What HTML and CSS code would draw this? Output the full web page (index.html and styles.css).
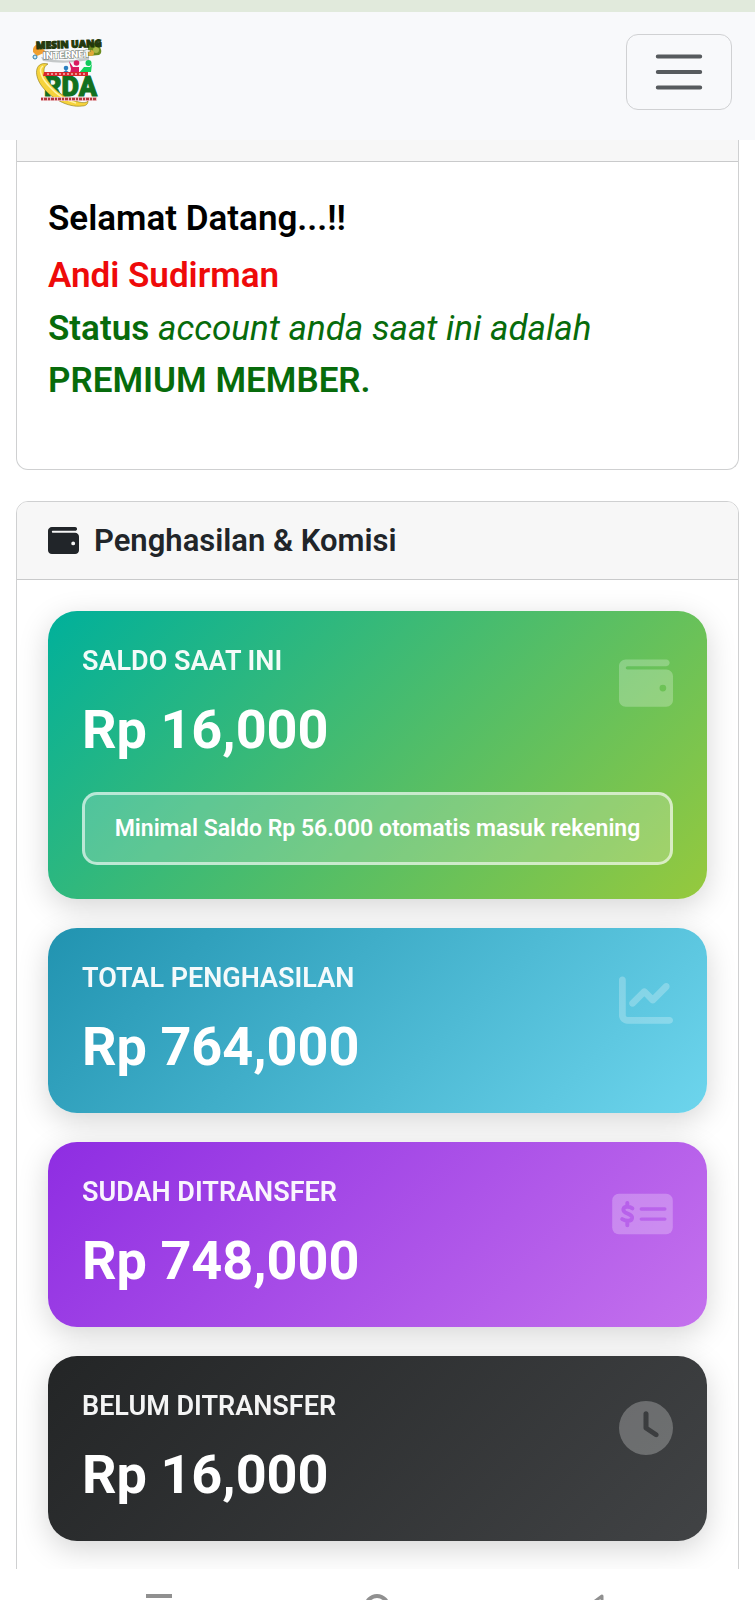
FILE: index.html
```html
<!DOCTYPE html>
<html lang="id">
<head>
    <meta charset="UTF-8">
    <meta name="viewport" content="width=device-width, initial-scale=1.0">
    <title>Member Area</title>
    <link rel="stylesheet" href="styles.css">
</head>
<body>
    <div class="status-strip"></div>
    <nav class="navbar">
        <a class="brand" href="#">
            <svg class="logo" viewBox="0 0 70 70" role="img" aria-label="Logo">
                <path d="M1 15q-1-6 5-8l8 8-9 4z" fill="#f0a030"/>
                <path d="M56 6q9-1 12 4 3 6-1 8l-11 1z" fill="#6b8c1f"/>
                <circle cx="64" cy="13" r="3" fill="#a9b94a"/>
                <circle cx="59" cy="16" r="3" fill="#e0a83a"/>
                <circle cx="3" cy="20" r="2" fill="#cfe9f7" stroke="#2b7fa8"/>
                <path d="M9 20q24 7 48 0v3q-24 5-46 1z" fill="#c4c8c9"/>
                <text class="logo-net" x="11" y="22" transform="rotate(-2 11 22)">INTERNET</text>
                <text class="logo-top" x="4" y="12" transform="rotate(-2 4 12)">MESIN UANG</text>
                <circle cx="34" cy="31" r="2.3" fill="#2a7fc0"/>
                <path d="M30 36l4-3 4 3z" fill="#2a7fc0"/>
                <path d="M37 24l4 6h6l0 6h-9l1-4z" fill="#d91a60"/>
                <circle cx="44.500" cy="26" r="2.800" fill="#d91a60"/>
                <path d="M47 36l5-6h6l2-3-1 8h-8z" fill="#12d35b"/>
                <circle cx="56.500" cy="26" r="3" fill="#12c95b"/>
                <text class="logo-rda" x="12" y="59">RDA</text>
                <path d="M16 27C4 24 1 36 9 48c9 13 27 23 41 21 4 0 6-2 6-5-2 2-5 2-9 1-11-2-23-10-30-20-6-8-7-15-1-18z" fill="#f6d33c" stroke="#8a7a1c" stroke-width=".6"/>
                <path d="M11 29c-6 4 0 14 7 21 7 8 17 14 26 16" fill="none" stroke="#fff3a8" stroke-width="1.500"/>
                <path d="M12 35h44v4H11z" fill="#d8262c"/>
                <path d="M15 37h38" stroke="#fff" stroke-width="1" stroke-dasharray="2 2"/>
                <path d="M9 60h56v4H9z" fill="#f0c9cb"/>
                <path d="M9 62h56" stroke="#b3353c" stroke-width="2.400" stroke-dasharray="2 1 3 1"/>
            </svg>
        </a>
        <button class="toggler" type="button" aria-label="Menu">
            <svg viewBox="0 0 30 30"><path d="M4 7h22M4 15h22M4 23h22" stroke="#212529" stroke-opacity=".75" stroke-width="2" stroke-linecap="round"/></svg>
        </button>
    </nav>

    <main class="content">
        <section class="card card-welcome">
            <div class="card-header"></div>
            <div class="card-body">
                <p class="greet">Selamat Datang...!!</p>
                <p class="member-name">Andi Sudirman</p>
                <p class="member-status"><b>Status</b> <i>account anda saat ini adalah</i> <b>PREMIUM MEMBER.</b></p>
            </div>
        </section>

        <section class="card card-income">
            <h5 class="card-header">
                <svg class="header-icon" viewBox="0 0 512 512"><path d="M64 32C28.700 32 0 60.700 0 96V416c0 35.300 28.700 64 64 64H448c35.300 0 64-28.700 64-64V192c0-35.300-28.700-64-64-64H80c-8.800 0-16-7.200-16-16s7.200-16 16-16H448c17.700 0 32-14.300 32-32s-14.300-32-32-32H64zM416 272a32 32 0 1 1 0 64 32 32 0 1 1 0-64z"/></svg>
                Penghasilan &amp; Komisi
            </h5>
            <div class="card-body">
                <div class="stat stat-saldo">
                    <div class="stat-row">
                        <div>
                            <div class="stat-label">SALDO SAAT INI</div>
                            <div class="stat-value">Rp 16,000</div>
                        </div>
                        <svg class="stat-icon" viewBox="0 0 512 512"><path d="M64 32C28.700 32 0 60.700 0 96V416c0 35.300 28.700 64 64 64H448c35.300 0 64-28.700 64-64V192c0-35.300-28.700-64-64-64H80c-8.800 0-16-7.200-16-16s7.200-16 16-16H448c17.700 0 32-14.300 32-32s-14.300-32-32-32H64zM416 272a32 32 0 1 1 0 64 32 32 0 1 1 0-64z"/></svg>
                    </div>
                    <div class="notice">Minimal Saldo Rp 56.000 otomatis masuk rekening</div>
                </div>

                <div class="stat stat-total">
                    <div class="stat-row">
                        <div>
                            <div class="stat-label">TOTAL PENGHASILAN</div>
                            <div class="stat-value">Rp 764,000</div>
                        </div>
                        <svg class="stat-icon" viewBox="0 0 512 512"><path d="M64 64c0-17.700-14.300-32-32-32S0 46.300 0 64V400c0 44.200 35.800 80 80 80H480c17.700 0 32-14.300 32-32s-14.300-32-32-32H80c-8.800 0-16-7.200-16-16V64zm406.600 86.600c12.500-12.500 12.500-32.800 0-45.300s-32.800-12.500-45.300 0L320 210.700l-57.400-57.400c-12.500-12.500-32.800-12.500-45.300 0l-112 112c-12.500 12.500-12.500 32.800 0 45.300s32.800 12.500 45.300 0L240 221.300l57.400 57.400c12.500 12.500 32.800 12.500 45.300 0l128-128z"/></svg>
                    </div>
                </div>

                <div class="stat stat-sudah">
                    <div class="stat-row">
                        <div>
                            <div class="stat-label">SUDAH DITRANSFER</div>
                            <div class="stat-value">Rp 748,000</div>
                        </div>
                        <svg class="stat-icon stat-icon-wide" viewBox="0 0 576 512">
                            <mask id="check">
                                <rect width="576" height="512" fill="#fff"/>
                                <path d="M276 208h224M276 304h224" stroke="#000" stroke-width="32" stroke-linecap="round"/>
                                <path d="M192 202c-20-14-78-26-85 8-6 52 87 32 82 84-5 38-62 30-93 10M144 152v32M144 330v32" fill="none" stroke="#000" stroke-width="38" stroke-linecap="round"/>
                            </mask>
                            <rect y="64" width="576" height="384" rx="64" mask="url(#check)"/>
                        </svg>
                    </div>
                </div>

                <div class="stat stat-belum">
                    <div class="stat-row">
                        <div>
                            <div class="stat-label">BELUM DITRANSFER</div>
                            <div class="stat-value">Rp 16,000</div>
                        </div>
                        <svg class="stat-icon" viewBox="0 0 512 512"><path d="M256 0a256 256 0 1 1 0 512A256 256 0 1 1 256 0zM232 120V256c0 8 4 15.500 10.700 20l96 64c11 7.400 25.900 4.400 33.300-6.700s4.400-25.900-6.700-33.300L280 243.200V120c0-13.300-10.700-24-24-24s-24 10.700-24 24z"/></svg>
                    </div>
                </div>
            </div>
        </section>
    </main>

    <footer class="sysbar">
        <svg viewBox="0 0 26 26"><path d="M0 2h26M0 13h26M0 24h26" stroke="#909090" stroke-width="4"/></svg>
        <svg viewBox="0 0 26 26"><circle cx="13" cy="13" r="11" fill="none" stroke="#909090" stroke-width="4"/></svg>
        <svg viewBox="0 0 26 26"><path d="M19 2L4 13l15 11z" fill="none" stroke="#909090" stroke-width="3" stroke-linejoin="round"/></svg>
    </footer>
</body>
</html>
```
FILE: styles.css
```css
* {
    box-sizing: border-box;
}
body {
    margin: 0;
    height: 100vh;
    display: flex;
    flex-direction: column;
    overflow: hidden;
    background: #fff;
    color: #212529;
    font-family: Roboto, sans-serif;
}
p, h5 {
    margin: 0;
}
.status-strip {
    flex: none;
    height: 12px;
    background: #e1eadc;
}
.navbar {
    flex: none;
    height: 128px;
    display: flex;
    justify-content: space-between;
    align-items: flex-start;
    padding: 22px 23px 0 32px;
    background: #f8f9fb;
}
.brand {
    padding-top: 3px;
}
.logo {
    display: block;
    width: 70px;
    height: 70px;
    overflow: visible;
}
.logo-top {
    font-family: "Open Sans", sans-serif;
    font-size: 10px;
    font-weight: 800;
    fill: #23380c;
    stroke: #23380c;
    stroke-width: 1px;
}
.logo-net {
    font-size: 10px;
    font-weight: 900;
    fill: #fff;
    stroke: #5d6b60;
    stroke-width: 1px;
    paint-order: stroke;
}
.logo-rda {
    font-size: 27px;
    font-weight: 900;
    fill: #12701f;
    stroke: #12701f;
    stroke-width: 1px;
}
.toggler {
    width: 106px;
    height: 76px;
    padding: 0;
    display: flex;
    justify-content: center;
    align-items: center;
    background: transparent;
    border: 1px solid #d0d1d3;
    border-radius: 12px;
}
.toggler svg {
    width: 58px;
    height: 58px;
}
.content {
    flex: 1;
    min-height: 0;
    overflow: hidden;
    padding: 0 16px;
}
.card {
    border: 1px solid #cfd0d1;
    border-radius: 12px;
    overflow: hidden;
    background: #fff;
}
.card-header {
    display: flex;
    align-items: center;
    gap: 15px;
    padding: 16px 31px;
    background: #f7f7f7;
    border-bottom: 1px solid #c9cacb;
    font-size: 31px;
    line-height: 45px;
    font-weight: 600;
}
.card-body {
    padding: 31px;
}
/* top of this card sits under the navbar */
.card-welcome {
    border-top: 0;
    border-radius: 0 0 12px 12px;
    margin-bottom: 31px;
}
.card-welcome .card-header {
    padding: 21px 0 0;
}
.card-welcome .card-body {
    padding-bottom: 62px;
    font-size: 35px;
    line-height: 52px;
}
.greet {
    margin-bottom: 5px;
    font-weight: 600;
    color: #000;
}
.member-name {
    margin-bottom: 1px;
    font-weight: 600;
    color: #ee0a0a;
}
.member-status {
    color: #076b0b;
}
.member-status b {
    font-weight: 600;
}
.header-icon {
    width: 31px;
    height: 31px;
    fill: currentColor;
}
.stat {
    margin-bottom: 29px;
    padding: 34px;
    border-radius: 29px;
    color: #fff;
    box-shadow: 0 8px 30px rgba(0, 0, 0, 0.17);
}
.stat-saldo {
    background: linear-gradient(135deg, #00b09b, #96c93d);
}
.stat-total {
    background: linear-gradient(135deg, #2193b0, #6dd5ed);
}
.stat-sudah {
    background: linear-gradient(135deg, #8e2de2, #c471ed);
}
.stat-belum {
    background: linear-gradient(135deg, #232526, #414345);
}
.stat-row {
    display: flex;
    justify-content: space-between;
    align-items: flex-start;
}
.stat-label {
    margin-bottom: 20px;
    font-size: 27px;
    line-height: 32px;
    font-weight: 600;
    opacity: 0.95;
}
.stat-value {
    font-size: 54px;
    line-height: 65px;
    font-weight: 700;
}
.stat-icon {
    flex: none;
    width: 54px;
    height: 54px;
    margin-top: 11px;
    fill: #fff;
    opacity: 0.25;
}
.stat-icon-wide {
    width: 61px;
}
.notice {
    margin-top: 30px;
    padding: 16px 20px;
    border: 3px solid rgba(255, 255, 255, 0.6);
    border-radius: 15px;
    background: rgba(255, 255, 255, 0.2);
    font-size: 23px;
    line-height: 35px;
    font-weight: 600;
    text-align: center;
}
.sysbar {
    flex: none;
    height: 31px;
    display: flex;
    justify-content: space-around;
    align-items: flex-start;
    padding: 25px 50px 0;
    overflow: hidden;
    background: #fff;
}
.sysbar svg {
    flex: none;
    width: 26px;
    height: 26px;
}
```
